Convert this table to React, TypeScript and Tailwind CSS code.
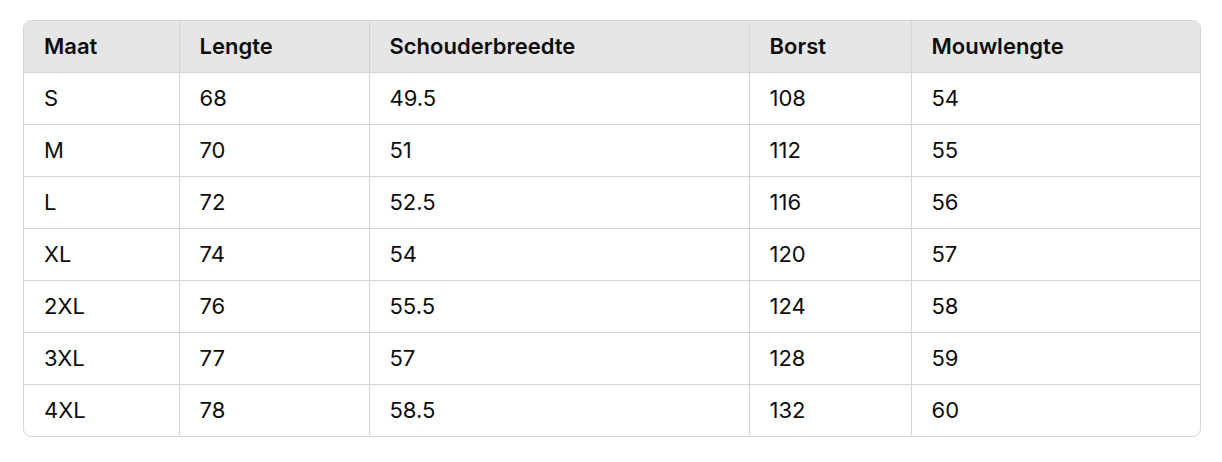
const headers = ['Maat', 'Lengte', 'Schouderbreedte', 'Borst', 'Mouwlengte'];

const rows = [
  ['S', '68', '49.5', '108', '54'],
  ['M', '70', '51', '112', '55'],
  ['L', '72', '52.5', '116', '56'],
  ['XL', '74', '54', '120', '57'],
  ['2XL', '76', '55.5', '124', '58'],
  ['3XL', '77', '57', '128', '59'],
  ['4XL', '78', '58.5', '132', '60'],
];

const widths = ['w-[155px]', 'w-[190px]', 'w-[380px]', 'w-[162px]', 'w-[290px]'];

const App = () => {
  return (
    <div className="bg-white w-[1222px] h-[462px] pt-[20px] pl-[23px] font-['Inter',sans-serif] text-[#0d0d0d]">
      <div className="w-[1178px] border border-[#d5d5d5] rounded-lg overflow-hidden">
        <table className="w-full border-collapse table-fixed text-[22px]">
          <thead>
            <tr className="bg-[#e6e6e6] h-[51px]">
              {headers.map((h, i) => (
                <th
                  key={h}
                  className={`${widths[i]} text-left font-semibold px-5 ${i > 0 ? 'border-l border-[#d5d5d5]' : ''}`}
                >
                  {h}
                </th>
              ))}
            </tr>
          </thead>
          <tbody>
            {rows.map((r) => (
              <tr key={r[0]} className="h-[52px] border-t border-[#d5d5d5]">
                {r.map((c, i) => (
                  <td key={i} className={`px-5 ${i > 0 ? 'border-l border-[#d5d5d5]' : ''}`}>
                    {c}
                  </td>
                ))}
              </tr>
            ))}
          </tbody>
        </table>
      </div>
    </div>
  );
};

export default App;
